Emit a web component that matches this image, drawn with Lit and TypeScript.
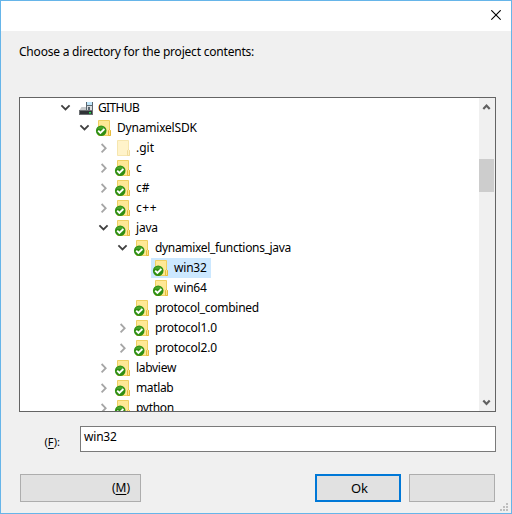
import { LitElement, html, css, svg, nothing } from "lit";
import { customElement, property } from "lit/decorators.js";

type Node = {
  label: string;
  level: number;
  state: "open" | "closed" | "leaf";
  icon: "drive" | "folder" | "hidden";
  spacing?: number;
  selected?: boolean;
};

const NODES: Node[] = [
  { label: "GITHUB", level: 0, state: "open", icon: "drive", spacing: -0.65 },
  { label: "DynamixelSDK", level: 1, state: "open", icon: "folder", spacing: -0.2 },
  { label: ".git", level: 2, state: "closed", icon: "hidden" },
  { label: "c", level: 2, state: "closed", icon: "folder" },
  { label: "c#", level: 2, state: "closed", icon: "folder" },
  { label: "c++", level: 2, state: "closed", icon: "folder", spacing: 0.6 },
  { label: "java", level: 2, state: "open", icon: "folder", spacing: -0.2 },
  { label: "dynamixel_functions_java", level: 3, state: "open", icon: "folder", spacing: -0.33 },
  { label: "win32", level: 4, state: "leaf", icon: "folder", selected: true, spacing: -0.2 },
  { label: "win64", level: 4, state: "leaf", icon: "folder", spacing: -0.2 },
  { label: "protocol_combined", level: 3, state: "leaf", icon: "folder", spacing: -0.28 },
  { label: "protocol1.0", level: 3, state: "closed", icon: "folder", spacing: -0.2 },
  { label: "protocol2.0", level: 3, state: "closed", icon: "folder", spacing: -0.2 },
  { label: "labview", level: 2, state: "closed", icon: "folder", spacing: -0.3 },
  { label: "matlab", level: 2, state: "closed", icon: "folder", spacing: -0.35 },
  { label: "python", level: 2, state: "closed", icon: "folder", spacing: -0.3 },
];

@customElement("tree-icon")
class TreeIcon extends LitElement {
  @property() kind: Node["icon"] = "folder";
  static styles = css`
    :host { display: block; width: 16px; height: 20px; }
    svg { display: block; overflow: visible; }
  `;
  render() {
    if (this.kind === "drive") {
      return html`<svg width="16" height="20" viewBox="0 0 16 20">
        <path d="M3.5 9H13L14.5 13H1Z" fill="#c6c8ca" />
        <rect x="8" y="4" width="7" height="8" fill="#5b6770" />
        <rect x="9" y="4" width="5" height="3" fill="#bfe6fb" />
        <rect x="9" y="8" width="5" height="4" fill="#d9dcde" />
        <rect x="10" y="9" width="2" height="3" fill="#5b6770" />
        <path d="M1 12H15V17H1Z" fill="#6d7073" />
        <path d="M2 13H14V16H2Z" fill="#303336" />
        <rect x="11" y="14" width="2" height="1.5" fill="#25e052" />
      </svg>`;
    }
    const dim = this.kind === "hidden";
    return html`<svg width="16" height="20" viewBox="0 0 16 20">
      <g opacity=${dim ? 0.5 : 1}>
        <path d="M1.5 2.5H12.5V11.5L13.5 12.5V17.5H1.5Z" fill="#ffe896" stroke="#efcf62" />
        <path d="M11.5 17V12.5L12.5 11.5L13.5 12.5V17.5H11.5Z" fill="#ffe488" stroke="#e5bb3e" />
      </g>
      ${dim
        ? nothing
        : svg`<circle cx="4.2" cy="12.8" r="5.3" fill="#2f8f12" />
            <path d="M.2 10.8A4.6 4.6 0 0 1 8.2 10.8Q4 11 .2 10.8Z" fill="#4aa32b" />
            <path d="M1.2 12.7L3.4 15L7.4 11" fill="none" stroke="#fff" stroke-width="1.9" />`}
    </svg>`;
  }
}

@customElement("tree-row")
class TreeRow extends LitElement {
  @property({ attribute: false }) node!: Node;
  static styles = css`
    :host { display: block; height: 20px; }
    .row { display: flex; height: 20px; }
    .toggle { width: 13px; height: 20px; flex: none; }
    .toggle svg { display: block; }
    .item { display: flex; padding: 0 4px 0 3px; margin-left: 3px; }
    .item.selected { background: #cce8ff; }
    .label { margin-left: 4px; line-height: 19px; white-space: nowrap; }
  `;
  render() {
    const n = this.node;
    return html`<div class="row" style="padding-left:${39 + n.level * 19}px">
      <span class="toggle">
        ${n.state === "leaf"
          ? nothing
          : html`<svg width="13" height="20" viewBox="0 0 13 20">
              <path
                d=${n.state === "open" ? "M2.4 7.3L6.5 11.4L10.6 7.3" : "M4.6 6L8.7 10.2L4.6 14.4"}
                fill="none"
                stroke=${n.state === "open" ? "#404040" : "#a6a6a6"}
                stroke-width="1.8"
              />
            </svg>`}
      </span>
      <span class="item ${n.selected ? "selected" : ""}">
        <tree-icon .kind=${n.icon}></tree-icon>
        <span class="label" style="letter-spacing:${n.spacing ?? 0}px">${n.label}</span>
      </span>
    </div>`;
  }
}

@customElement("app-root")
class AppRoot extends LitElement {
  static styles = css`
    :host {
      display: block; width: 512px; height: 514px; box-sizing: border-box;
      border: 1px solid #66b5e9; background: #f0f0f0; color: #000;
      font: 12px "Noto Sans", "Open Sans", sans-serif; overflow: hidden; position: relative;
    }
    .title { height: 30px; background: #fff; display: flex; justify-content: flex-end; padding-right: 10px; }
    .title svg { margin-top: 9px; }
    .prompt { height: 66px; padding: 12px 0 0 18px; box-sizing: border-box; line-height: 18px; white-space: nowrap; letter-spacing: -0.21px; }
    .tree { margin-left: 18px; width: 477px; height: 315px; box-sizing: border-box; border: 1px solid #646464; background: #fff; display: flex; }
    .rows { flex: 1; overflow: hidden; }
    .bar { width: 16px; background: #f0f0f0; display: flex; flex-direction: column; }
    .thumb { width: 15px; height: 33px; background: #cdcdcd; margin-top: 44px; }
    .bar .down { margin-top: auto; }
    .bar svg { display: block; }
    .field { display: flex; margin: 14px 0 0 18px; height: 26px; }
    .field label { width: 41px; text-align: right; margin-right: 20px; line-height: 31px; font-size: 11px; }
    .input { width: 416px; box-sizing: border-box; border: 1px solid #7a7a7a; background: #fff; padding-left: 3px; line-height: 20px; letter-spacing: -0.2px; }
    .buttons { display: flex; margin: 22px 0 0 19px; }
    .btn { box-sizing: border-box; height: 28px; width: 86px; border: 1px solid #adadad; background: #e1e1e1; text-align: center; line-height: 26px; }
    .make { width: 121px; text-align: right; padding-right: 10px; }
    .ok { margin: 0 8px 0 174px; border: 2px solid #0078d7; line-height: 24px; padding-left: 3px; font-size: 13px; }
    .grip { position: absolute; right: 3px; bottom: 2px; }
    u { text-underline-offset: 2px; }
  `;
  render() {
    return html`
      <div class="title">
        <svg width="10" height="11" viewBox="0 0 10 11"><path d="M.3 .3L9.7 9.7M9.7 .3L.3 9.7" stroke="#000" stroke-width="1.2" /></svg>
      </div>
      <div class="prompt">Choose a directory for the project contents:</div>
      <div class="tree">
        <div class="rows">${NODES.map((n) => html`<tree-row .node=${n}></tree-row>`)}</div>
        <div class="bar">
          <svg width="16" height="17" viewBox="0 0 16 17"><path d="M4.3 11L7.5 7.6L10.7 11" fill="none" stroke="#606060" stroke-width="2.2" /></svg>
          <div class="thumb"></div>
          <svg class="down" width="16" height="17" viewBox="0 0 16 17"><path d="M4.3 6.5L7.5 9.9L10.7 6.5" fill="none" stroke="#606060" stroke-width="2.2" /></svg>
        </div>
      </div>
      <div class="field"><label>(<u>F</u>):</label><div class="input">win32</div></div>
      <div class="buttons">
        <div class="btn make">(<u>M</u>)</div>
        <div class="btn ok">Ok</div>
        <div class="btn"></div>
      </div>
      <svg class="grip" width="8" height="8" viewBox="0 0 8 8" fill="#bfbfbf">
        <path d="M6 0h2v2H6zM3 3h2v2H3zM6 3h2v2H6zM0 6h2v2H0zM3 6h2v2H3zM6 6h2v2H6z" />
      </svg>
    `;
  }
}
